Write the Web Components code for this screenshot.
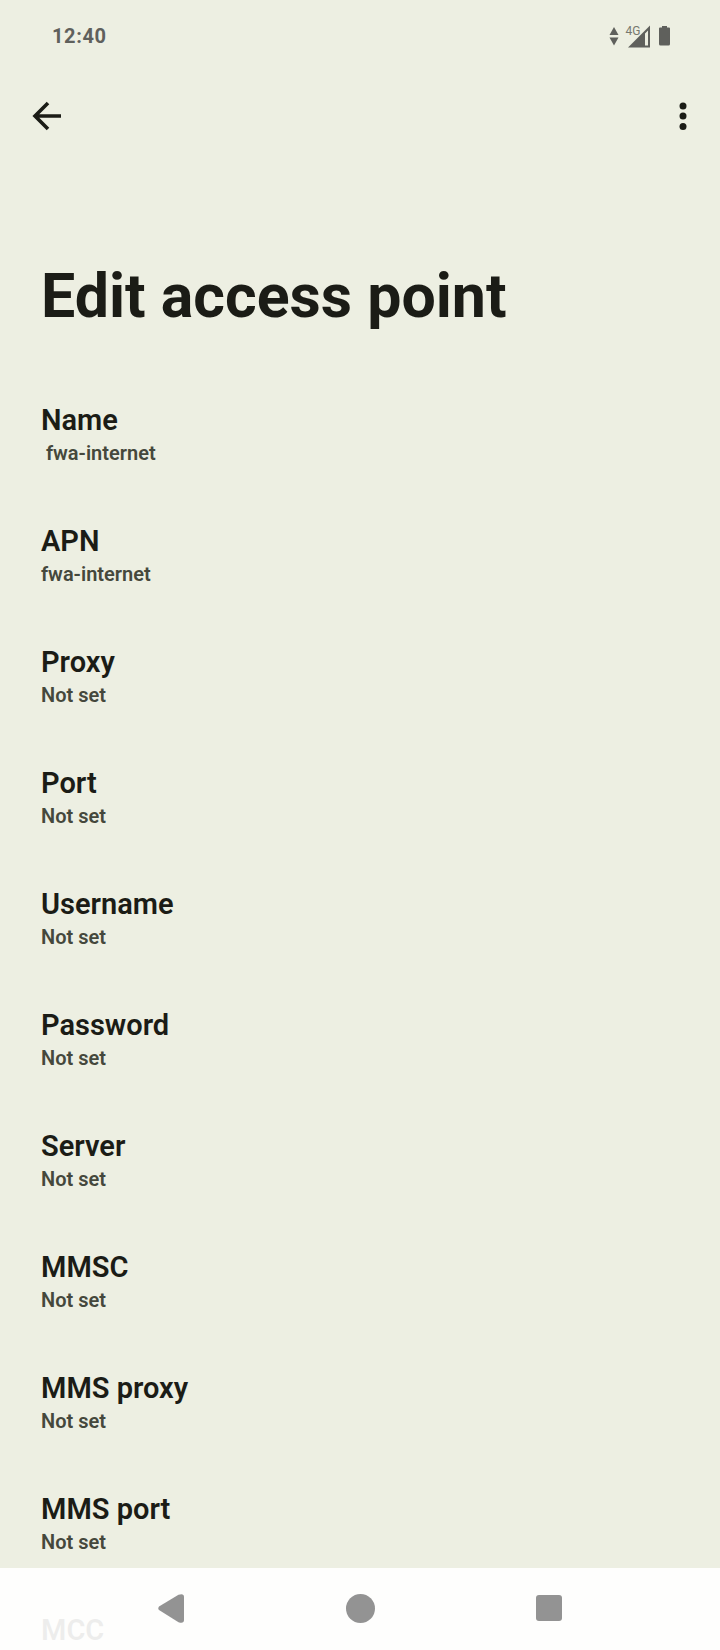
<!DOCTYPE html>
<html>
<head>
<meta charset="utf-8">
<title>Edit access point</title>
<style>
html, body { margin: 0; padding: 0; background: #edefe2; }
body { width: 720px; height: 1650px; overflow: hidden; font-family: Roboto, sans-serif; }
</style>
</head>
<body>
<apn-screen>
  <status-bar time="12:40"></status-bar>
  <app-toolbar></app-toolbar>
  <page-title>Edit access point</page-title>
  <apn-list>
    <apn-row label="Name" value=" fwa-internet"></apn-row>
    <apn-row label="APN" value="fwa-internet"></apn-row>
    <apn-row label="Proxy"></apn-row>
    <apn-row label="Port"></apn-row>
    <apn-row label="Username"></apn-row>
    <apn-row label="Password"></apn-row>
    <apn-row label="Server"></apn-row>
    <apn-row label="MMSC"></apn-row>
    <apn-row label="MMS proxy"></apn-row>
    <apn-row label="MMS port"></apn-row>
    <apn-row label="MCC"></apn-row>
  </apn-list>
  <nav-bar></nav-bar>
</apn-screen>

<script>
function shadowFrom(el, html) {
  const tpl = document.createElement("template");
  tpl.innerHTML = html;
  el.attachShadow({ mode: "open" });
  el.shadowRoot.appendChild(tpl.content.cloneNode(true));
}

class ApnScreen extends HTMLElement {
  constructor() {
    super();
    shadowFrom(this, `
<style>
:host { display: block; position: relative; width: 720px; height: 1650px; overflow: hidden; background: #edefe2; color: #1b1c16; font-family: Roboto, sans-serif; }
</style>
<slot></slot>`);
  }
}

class StatusBar extends HTMLElement {
  constructor() {
    super();
    shadowFrom(this, `
<style>
:host { display: flex; align-items: center; justify-content: space-between; height: 72px; padding: 0 46px 0 52px; box-sizing: border-box; color: #5f605c; }
span { font-size: 20px; font-weight: 700; letter-spacing: 0.6px; }
svg { display: block; }
</style>
<span></span>
<svg width="66" height="26" viewBox="0 0 66 26" fill="#5f605c">
  <path d="M1.500 12 L6 4 L10.500 12Z M1.500 14.500 L10.500 14.500 L6 22.500Z"/>
  <text x="17.500" y="11.500" font-family="Roboto, sans-serif" font-size="12" fill="#77786f">4G</text>
  <path d="M20 24.500 L42 2.500 L42 24.500Z M37 10.500 L37 22.500 L40 22.500 L40 7.500Z" fill-rule="evenodd"/>
  <path d="M51 5.500 Q51 4.500 52 4.500 L54 4.500 L54 3 L59 3 L59 4.500 L61 4.500 Q62 4.500 62 5.500 L62 21 Q62 22.500 60.500 22.500 L52.500 22.500 Q51 22.500 51 21Z"/>
</svg>`);
    this.shadowRoot.querySelector("span").textContent = this.getAttribute("time");
  }
}

class AppToolbar extends HTMLElement {
  constructor() {
    super();
    shadowFrom(this, `
<style>
:host { display: flex; align-items: center; justify-content: space-between; height: 80px; padding: 10px 25px 0 29px; box-sizing: border-box; }
svg { display: block; }
</style>
<svg width="40" height="40" viewBox="0 0 40 40" fill="none" stroke="#1b1c16" stroke-width="3.600">
  <path d="M6 19 L32 19 M19 6 L6 19 L19 32"/>
</svg>
<svg width="24" height="40" viewBox="0 0 24 40" fill="#1b1c16">
  <circle cx="12" cy="9" r="3.500"/><circle cx="12" cy="19" r="3.500"/><circle cx="12" cy="29.500" r="3.500"/>
</svg>`);
  }
}

class PageTitle extends HTMLElement {
  constructor() {
    super();
    shadowFrom(this, `
<style>
:host { display: block; padding: 110px 41px 0; height: 249px; box-sizing: border-box; font-size: 60.850px; line-height: 70px; font-weight: 700; white-space: nowrap; }
</style>
<slot></slot>`);
  }
}

class ApnList extends HTMLElement {
  constructor() {
    super();
    shadowFrom(this, `
<style>
:host { display: flex; flex-direction: column; }
</style>
<slot></slot>`);
  }
}

class ApnRow extends HTMLElement {
  constructor() {
    super();
    shadowFrom(this, `
<style>
:host { display: block; height: 121px; flex: none; padding: 2px 41px 0; box-sizing: border-box; }
div { white-space: pre; }
.label { font-size: 29px; line-height: 34px; font-weight: 600; color: #1b1c16; }
.value { font-size: 20px; line-height: 32px; font-weight: 600; color: #45483c; }
</style>
<div class="label"></div>
<div class="value"></div>`);
    this.shadowRoot.querySelector(".label").textContent = this.getAttribute("label");
    this.shadowRoot.querySelector(".value").textContent = this.getAttribute("value") || "Not set";
  }
}

class NavBar extends HTMLElement {
  constructor() {
    super();
    shadowFrom(this, `
<style>
:host { position: absolute; left: 0; right: 0; bottom: 0; height: 82px; background: rgba(255,255,255,0.92); display: flex; justify-content: space-between; align-items: center; padding: 0 158px 2px; box-sizing: border-box; }
svg { display: block; }
</style>
<svg width="26" height="29" viewBox="0 0 26 29" fill="#939393">
  <path d="M1 12.500 Q-0.500 14.500 1 16 L20.500 28.200 Q26 30 26 26 L26 3 Q26 -1 20.500 0.800Z"/>
</svg>
<svg width="29" height="29" viewBox="0 0 29 29" fill="#939393">
  <circle cx="14.500" cy="14.500" r="14.500"/>
</svg>
<svg width="26" height="26" viewBox="0 0 26 26" fill="#939393">
  <rect width="26" height="26" rx="3"/>
</svg>`);
  }
}

customElements.define("apn-screen", ApnScreen);
customElements.define("status-bar", StatusBar);
customElements.define("app-toolbar", AppToolbar);
customElements.define("page-title", PageTitle);
customElements.define("apn-list", ApnList);
customElements.define("apn-row", ApnRow);
customElements.define("nav-bar", NavBar);
</script>
</body>
</html>
